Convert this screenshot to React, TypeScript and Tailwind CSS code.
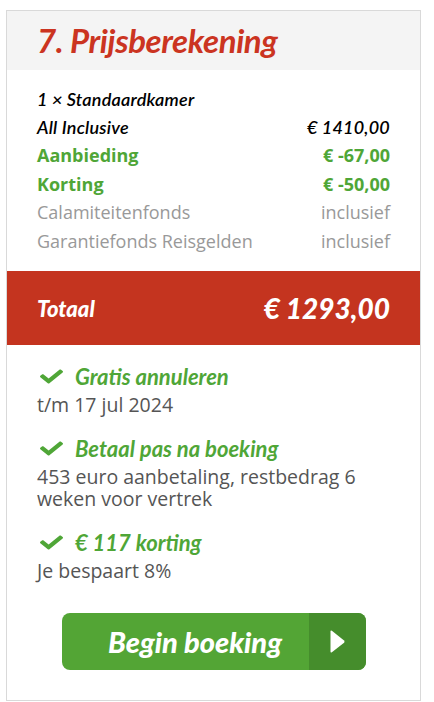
export default function App() {
  const rows = [
    { l: "1 × Standaardkamer", r: "", cls: "italic font-semibold text-black font-[Lato,sans-serif] text-[18px] tracking-[0.2px]" },
    { l: "All Inclusive", r: "€ 1410,00", cls: "italic font-semibold text-black font-[Lato,sans-serif] text-[18px] tracking-[0.2px]" },
    { l: "Aanbieding", r: "€ -67,00", cls: "font-bold text-[#4fa637] font-['Open_Sans',sans-serif] text-[18px]" },
    { l: "Korting", r: "€ -50,00", cls: "font-bold text-[#4fa637] font-['Open_Sans',sans-serif] text-[18px]" },
    { l: "Calamiteitenfonds", r: "inclusief", cls: "text-[#999999] font-['Open_Sans',sans-serif] text-[18px]" },
    { l: "Garantiefonds Reisgelden", r: "inclusief", cls: "text-[#999999] font-['Open_Sans',sans-serif] text-[18px]" },
  ];

  const perks = [
    { t: "Gratis annuleren", d: "t/m 17 jul 2024" },
    { t: "Betaal pas na boeking", d: "453 euro aanbetaling, restbedrag 6 weken voor vertrek" },
    { t: "€ 117 korting", d: "Je bespaart 8%" },
  ];

  return (
    <div className="min-h-screen bg-white pt-[10px] pl-[6px]">
      <div className="w-[415px] border border-[#d9d9d9] bg-white">
        <div className="h-[59px] bg-[#f4f4f4] px-[30px] flex items-center">
          <h2 className="text-[33px] font-bold italic text-[#cb3421] font-[Lato,sans-serif] tracking-[-0.4px]">
            7. Prijsberekening
          </h2>
        </div>

        <div className="px-[30px] pt-[15px] pb-[16px]">
          {rows.map((row) => (
            <div key={row.l} className={`flex justify-between h-[28.4px] items-center ${row.cls}`}>
              <span>{row.l}</span>
              <span>{row.r}</span>
            </div>
          ))}
        </div>

        <div className="h-[74px] bg-[#c4341f] px-[30px] flex items-center justify-between text-white italic font-black font-[Lato,sans-serif]">
          <span className="text-[22px]">Totaal</span>
          <span className="text-[28px]">€ 1293,00</span>
        </div>

        <div className="px-[30px] pt-[19px] flex flex-col gap-[20px]">
          {perks.map((p) => (
            <div key={p.t}>
              <div className="flex items-center h-[24px]">
                <svg viewBox="0 0 512 512" className="w-[23px] h-[19px] ml-[3px] mr-[12px] fill-[#4fa637]" preserveAspectRatio="none">
                  <path d="M173.898 439.404l-166.4-166.4c-9.997-9.997-9.997-26.206 0-36.204l36.203-36.204c9.997-9.998 26.207-9.998 36.204 0L192 312.69 432.095 72.596c9.997-9.997 26.207-9.997 36.204 0l36.203 36.204c9.997 9.997 9.997 26.206 0 36.204l-294.4 294.401c-9.998 9.997-26.207 9.997-36.204-.001z" />
                </svg>
                <span className="text-[22px] font-bold italic text-[#4fa637] font-[Lato,sans-serif]">{p.t}</span>
              </div>
              <p className="mt-[6px] text-[19.5px] leading-[22px] text-[#555555] font-['Open_Sans',sans-serif]">{p.d}</p>
            </div>
          ))}
        </div>

        <div className="flex justify-center pt-[31px] pb-[30px]">
          <button type="button" className="w-[304px] h-[57px] rounded-[8px] overflow-hidden flex bg-[#53a535]">
            <span className="flex-1 flex items-center justify-center pl-[20px] text-white text-[29px] font-black italic font-[Lato,sans-serif]">
              Begin boeking
            </span>
            <span className="w-[57px] bg-[#458d2c] flex items-center justify-center">
              <svg viewBox="0 0 16 26" className="w-[15px] h-[25px] fill-white">
                <path d="M2 1.5 Q0.5 0.6 0.5 2.5 L0.5 23.5 Q0.5 25.4 2 24.5 L15 14.2 Q16 13 15 11.8 Z" />
              </svg>
            </span>
          </button>
        </div>
      </div>
    </div>
  );
}
